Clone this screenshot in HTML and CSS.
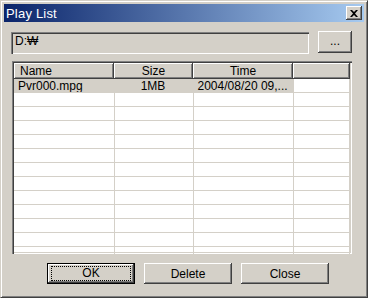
FILE: index.html
```html
<!DOCTYPE html>
<html lang="en">
<head>
    <meta charset="UTF-8">
    <title>Play List</title>
    <link rel="stylesheet" href="styles.css">
</head>
<body>
    <div class="window">
        <div class="titlebar">
            <span class="title">Play List</span>
            <button class="close-btn">
                <svg width="8" height="7" viewBox="0 0 8 7">
                    <path d="M0 0h2l2 2 2-2h2L5 3.5 8 7H6L4 5 2 7H0l3-3.5z" fill="#000"/>
                </svg>
            </button>
        </div>

        <div class="path-row">
            <div class="path-field">D:&#8361;</div>
            <button class="btn browse-btn">...</button>
        </div>

        <div class="list">
            <table>
                <thead>
                    <tr>
                        <th class="col-name">Name</th>
                        <th class="col-size">Size</th>
                        <th class="col-time">Time</th>
                        <th class="col-rest"></th>
                    </tr>
                </thead>
                <tbody id="listBody">
                    <tr class="selected">
                        <td class="col-name">Pvr000.mpg</td>
                        <td class="col-size center">1MB</td>
                        <td class="col-time center">2004/08/20 09,...</td>
                        <td class="col-rest"></td>
                    </tr>
                </tbody>
            </table>
        </div>

        <div class="button-row">
            <button class="btn default-btn"><span class="focus">OK</span></button>
            <button class="btn">Delete</button>
            <button class="btn">Close</button>
        </div>
    </div>
    <script>
        // leere Zeilen auffüllen
        const tbody = document.getElementById('listBody');
        for (let i = 0; i < 13; i++) {
            tbody.innerHTML += '<tr><td></td><td></td><td></td><td></td></tr>';
        }
    </script>
</body>
</html>
```

FILE: styles.css
```css
body {
    margin: 0;
    font-family: 'Liberation Sans', Arial, sans-serif;
    font-size: 12px;
    color: #000;
}

.window {
    width: 368px;
    height: 298px;
    box-sizing: border-box;
    border: 1px solid;
    border-color: #d4d0c8 #404040 #404040 #d4d0c8;
    box-shadow: inset 1px 1px #fff, inset -1px -1px #808080;
    padding: 3px;
    background-color: #d4d0c8;
    overflow: hidden;
}

.titlebar {
    height: 18px;
    display: flex;
    align-items: center;
    justify-content: space-between;
    padding: 0 2px 0 2px;
    background: linear-gradient(to right, #0a246a, #a6caf0);
}

.title {
    color: #fff;
    font-size: 13px;
    padding-left: 0;
    letter-spacing: 0.2px;
}

.close-btn {
    width: 16px;
    height: 14px;
    padding: 0;
    margin: 0;
    display: flex;
    align-items: center;
    justify-content: center;
    background-color: #d4d0c8;
    border: none;
    box-shadow: inset -1px -1px #404040, inset 1px 1px #fff, inset -2px -2px #808080;
}

.path-row {
    display: flex;
    align-items: flex-start;
    gap: 9px;
    margin: 9px 0 0 7px;
}

.path-field {
    width: 298px;
    height: 22px;
    box-sizing: border-box;
    margin-top: 1px;
    padding: 2px 4px;
    box-shadow: inset 1px 1px #808080, inset 2px 2px #404040, inset -1px -1px #fff, inset -2px -2px #d4d0c8;
}

.btn {
    font-family: inherit;
    font-size: 12px;
    color: #000;
    background-color: #d4d0c8;
    border: none;
    padding: 0;
    box-shadow: inset -1px -1px #404040, inset 1px 1px #fff, inset -2px -2px #808080;
}

.browse-btn {
    width: 34px;
    height: 22px;
    padding-bottom: 2px;
}

.list {
    width: 340px;
    height: 193px;
    box-sizing: border-box;
    margin: 7px 0 0 8px;
    padding: 2px;
    background-color: #fff;
    box-shadow: inset 1px 1px #808080, inset 2px 2px #404040, inset -1px -1px #fff, inset -2px -2px #d4d0c8;
    overflow: hidden;
}

table {
    border-collapse: collapse;
    table-layout: fixed;
    width: 336px;
}

th {
    height: 16px;
    box-sizing: border-box;
    padding: 0 6px;
    font-weight: normal;
    text-align: center;
    background-color: #d4d0c8;
    box-shadow: inset -1px -1px #404040, inset 1px 1px #fff, inset -2px -2px #808080;
}

th.col-name {
    text-align: left;
}

.col-name { width: 100px; }
.col-size { width: 79px; }
.col-time { width: 100px; }

td {
    height: 13px;
    padding: 0 5px 0 4px;
    line-height: 12px;
    white-space: nowrap;
    overflow: hidden;
    border-right: 1px solid #d4d0c8;
    border-bottom: 1px solid #d4d0c8;
}

td.center {
    text-align: center;
}

tr.selected td {
    background-color: #d4d0c8;
}

tr.selected td.col-rest {
    background-color: #fff;
}

.button-row {
    display: flex;
    gap: 9px;
    margin: 9px 0 0 43px;
}

.button-row .btn {
    width: 88px;
    height: 21px;
}

.default-btn {
    box-shadow: inset 0 0 0 1px #000, inset -2px -2px #404040, inset 2px 2px #fff, inset -3px -3px #808080;
    display: flex;
    align-items: center;
    justify-content: center;
}

.focus {
    display: block;
    width: 78px;
    height: 13px;
    line-height: 13px;
    outline: 1px dotted #000;
}
```
